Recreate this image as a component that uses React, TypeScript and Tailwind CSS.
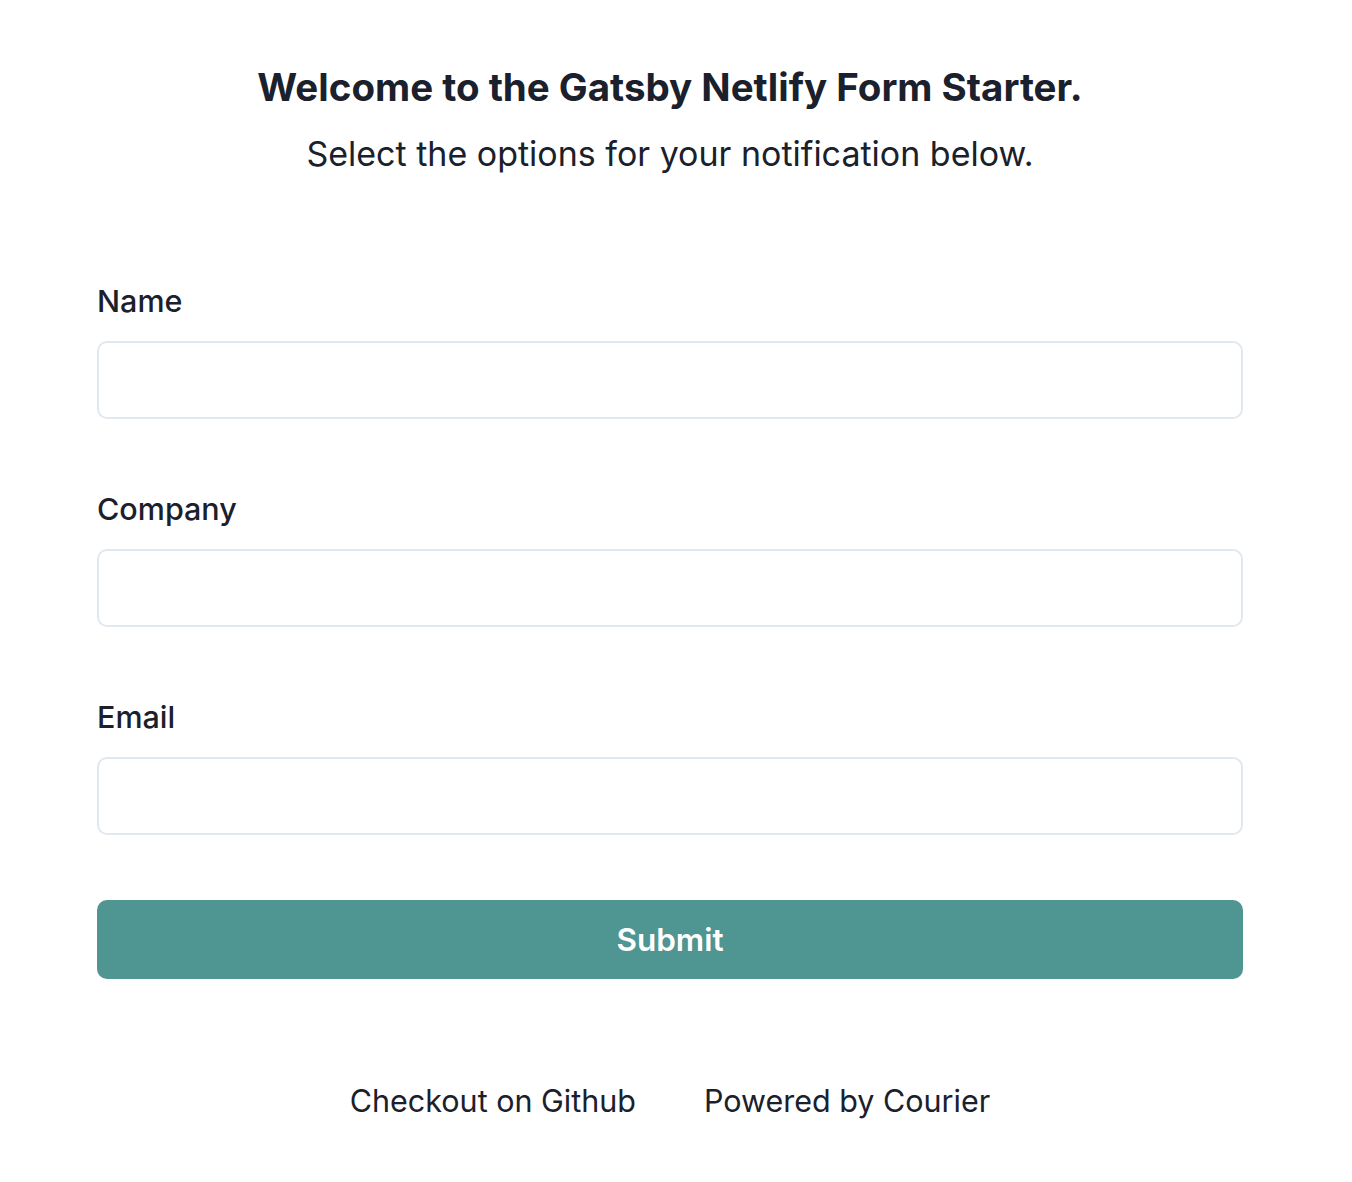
import React from "react";

const fields = ["Name", "Company", "Email"];

export default function App() {
  return (
    <div
      className="min-h-[1182px] w-[1340px] bg-white text-[#1a202c]"
      style={{ fontFamily: "Inter, 'Noto Sans', sans-serif" }}
    >
      <div className="px-[97px] pt-[64px]">
        <h1 className="text-center text-[38.5px] font-bold leading-[46px]">
          Welcome to the Gatsby Netlify Form Starter.
        </h1>
        <p className="mt-[24px] text-center text-[34px] leading-[40px]">
          Select the options for your notification below.
        </p>

        <form className="mt-[109px]" onSubmit={(e) => e.preventDefault()}>
          {fields.map((f, i) => (
            <div key={f} className={i > 0 ? "mt-[72px]" : ""}>
              <label className="block text-[30.5px] font-medium leading-[36px]">
                {f}
              </label>
              <input
                type={f === "Email" ? "email" : "text"}
                className="mt-[22px] block h-[78px] w-full rounded-[10px] border-2 border-[#e2e8f0] bg-white px-4 outline-none"
              />
            </div>
          ))}
          <button
            type="submit"
            className="mt-[65px] flex h-[79px] w-full items-center justify-center rounded-[10px] bg-[#4f9592] text-[31.5px] font-semibold text-white"
          >
            Submit
          </button>
        </form>

        <div className="mt-[104px] flex justify-center gap-[68px] text-[30.5px] leading-[36px]">
          <a href="#">Checkout on Github</a>
          <a href="#">Powered by Courier</a>
        </div>
      </div>
    </div>
  );
}
